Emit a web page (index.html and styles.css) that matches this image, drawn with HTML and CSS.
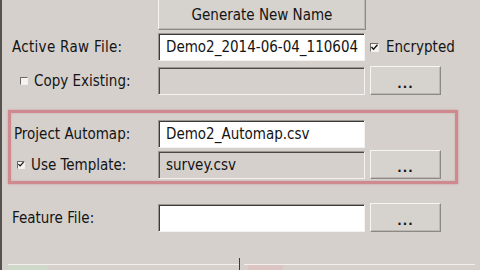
FILE: index.html
```html
<!DOCTYPE html>
<html lang="en">

<head>
    <meta charset="UTF-8">
    <meta name="viewport" content="width=device-width, initial-scale=1.0">
    <title>Raw File Setup</title>
    <link rel="stylesheet" href="styles.css">
</head>

<body>
    <div class="window">

        <div class="row top">
            <span></span>
            <button type="button" class="btn">Generate New Name</button>
        </div>

        <div class="row first">
            <label class="lbl">Active Raw File:</label>
            <div class="field">Demo2_2014-06-04_110604</div>
            <label class="check">
                <span class="box"><svg width="7" height="7" viewBox="0 0 7 7"><path d="M0.5 3 L2.5 5.2 L6.5 0.8" fill="none" stroke="#111" stroke-width="1.4"/></svg></span>
                Encrypted
            </label>
        </div>

        <div class="row second">
            <label class="lbl copy"><span class="box"></span>Copy Existing:</label>
            <div class="field off"></div>
            <button type="button" class="btn dots">...</button>
        </div>

        <!-- highlighted part -->
        <div class="group">
            <div class="row">
                <label class="lbl">Project Automap:</label>
                <div class="field">Demo2_Automap.csv</div>
            </div>
            <div class="row tpl">
                <label class="lbl use">
                    <span class="box"><svg width="7" height="7" viewBox="0 0 7 7"><path d="M0.5 3 L2.5 5.2 L6.5 0.8" fill="none" stroke="#111" stroke-width="1.4"/></svg></span>
                    Use Template:
                </label>
                <div class="field off">survey.csv</div>
                <button type="button" class="btn dots">...</button>
            </div>
        </div>

        <div class="row feature">
            <label class="lbl">Feature File:</label>
            <div class="field"></div>
            <button type="button" class="btn dots">...</button>
        </div>

        <div class="status">
            <div class="pane"><div class="bar"><span class="tint green"></span></div></div>
            <div class="pane right"><div class="bar"><span class="tint pink"></span></div></div>
        </div>

    </div>
</body>

</html>
```

FILE: styles.css
```css
html,
body {
    margin: 0;
    height: 100%;
}

body {
    background-color: #d5d0cc;
    font-family: "DejaVu Sans Condensed", "DejaVu Sans", Verdana, sans-serif;
    font-stretch: condensed;
    font-size: 15px;
    color: #141414;
    overflow: hidden;
}

.window {
    height: 270px;
    box-sizing: border-box;
    border-left: 2px solid #56524f;
    padding-left: 6px;
    padding-right: 5px;
    display: flex;
    flex-direction: column;
}

.row {
    display: grid;
    grid-template-columns: 145px 207px 1fr;
    column-gap: 5px;
    align-items: center;
    height: 28px;
}

.row.top {
    height: 30px;
}

.row.first {
    margin-top: 3px;
}

.row.second {
    margin-top: 5px;
}

.lbl {
    padding-left: 4px;
    display: flex;
    align-items: center;
    white-space: nowrap;
}

.row.first .lbl {
    letter-spacing: 0.3px;
}

.lbl.copy {
    padding-left: 12px;
}

.box {
    width: 8px;
    height: 8px;
    box-sizing: border-box;
    border: 1px solid;
    border-color: #6e6a67 #f2efed #f2efed #6e6a67;
    background-color: #f6f4f2;
    display: inline-flex;
    align-items: center;
    justify-content: center;
    margin-right: 6px;
}

.box svg {
    display: block;
}

.check {
    display: flex;
    align-items: center;
    white-space: nowrap;
}

.check .box {
    width: 9px;
    height: 9px;
    margin-right: 7px;
}

.btn {
    font-family: inherit;
    font-stretch: inherit;
    font-size: 15px;
    color: #141414;
    background-color: #d6d2ce;
    border: 1px solid;
    border-color: #f7f5f3 #8c8884 #8c8884 #f7f5f3;
    box-shadow: inset -1px -1px 0 #bdb8b4;
    height: 100%;
    padding: 0;
    margin: 0;
}

.row.top .btn {
    width: 208px;
    height: 30px;
    border-top: none;
}

.btn.dots {
    width: 71px;
    height: 29px;
    font-size: 13px;
    font-weight: bold;
    letter-spacing: 1px;
    padding-top: 6px;
}

.field {
    height: 28px;
    box-sizing: border-box;
    background-color: #fff;
    border: 1px solid;
    border-color: #9a9692 #f4f2f0 #f4f2f0 #9a9692;
    box-shadow: inset 1px 1px 0 #3c3a38;
    padding-left: 7px;
    display: flex;
    align-items: center;
    white-space: nowrap;
    overflow: hidden;
}

.field.off {
    background-color: #d5d0cc;
    box-shadow: inset 1px 1px 0 #4a4744;
}

.group {
    margin-top: 16px;
    width: 450px;
    box-sizing: border-box;
    border: 3px solid #cf8a90;
    box-shadow: 0 0 2px rgba(205, 130, 136, 0.7), inset 0 0 2px rgba(205, 130, 136, 0.5);
    padding-top: 7px;
    padding-bottom: 3px;
    display: flex;
    flex-direction: column;
    gap: 2px;
}

.group .row {
    grid-template-columns: 142px 207px 1fr;
}

.group .lbl {
    padding-left: 3px;
}

.group .lbl.use {
    padding-left: 6px;
}

.row.feature {
    margin-top: 19px;
}

.status {
    margin-top: 27px;
    height: 12px;
    display: flex;
}

.pane {
    flex: 1;
    padding-top: 6px;
}

.pane.right {
    border-left: 1px solid #3e3b39;
    padding-left: 4px;
}

.bar {
    border-top: 1px solid #f2efed;
    height: 5px;
}

.tint {
    display: block;
    height: 5px;
}

.tint.green {
    width: 40px;
    background-color: #cfd9c9;
}

.tint.pink {
    width: 35px;
    margin-left: 4px;
    background-color: #dcc4c2;
}
```
